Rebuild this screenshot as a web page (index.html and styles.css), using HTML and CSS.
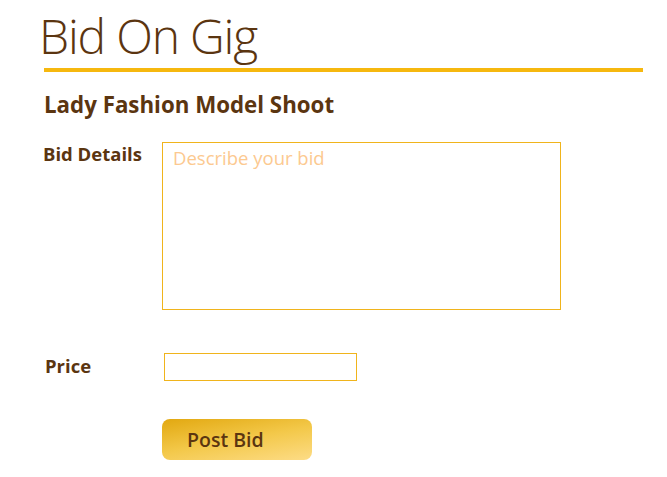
FILE: index.html
```html
<!DOCTYPE html>
<html>
<head>
<meta charset="utf-8">
<link rel="stylesheet" href="styles.css">
</head>
<body>
<div class="page">
  <h1 class="title">Bid On Gig</h1>
  <div class="rule"></div>
  <h2 class="gig">Lady Fashion Model Shoot</h2>
  <div class="row row-details">
    <label class="label">Bid Details</label>
    <textarea class="details" placeholder="Describe your bid"></textarea>
  </div>
  <div class="row row-price">
    <label class="label label-price">Price</label>
    <input class="price" type="text">
  </div>
  <div class="row row-btn">
    <button class="btn">Post Bid</button>
  </div>
</div>
</body>
</html>
```
FILE: styles.css
```css
html, body { margin: 0; padding: 0; background: #fff; }
body { font-family: "Open Sans", "Noto Sans", sans-serif; color: #5b3510; }
.page { padding: 8px 0 0 39px; width: 604px; }
.title {
  margin: 0;
  font-weight: 300;
  font-size: 48px;
  line-height: 56px;
  color: #5b3510;
  letter-spacing: -1.2px;
}
.rule { height: 4px; background: #f6b80f; margin: 4px 0 0 5px; }
.gig {
  margin: 19px 0 0 5px;
  font-size: 22.3px;
  font-weight: 700;
  line-height: 28px;
  letter-spacing: 0;
}
.row { display: flex; }
.label { font-weight: 700; font-size: 18.5px; line-height: 22px; }
.row-details { margin-top: 23px; }
.row-details .label { width: 119px; margin-left: 4px; margin-top: 1px; }
.details {
  width: 399px; height: 168px; box-sizing: border-box;
  border: 1px solid #f0b41c; border-radius: 0; resize: none; outline: none;
  font-family: inherit; font-size: 18.5px; line-height: 24px; padding: 3px 10px; margin: 0;
}
.details::placeholder { color: #fcc990; }
.row-price { margin-top: 43px; }
.label-price { width: 119px; margin-left: 6px; margin-top: 2px; }
.price {
  width: 193px; height: 28px; box-sizing: border-box; margin: 0;
  border: 1px solid #f0b41c; border-radius: 0; outline: none; padding: 0 6px;
}
.row-btn { margin-top: 38px; padding-left: 123px; }
.btn {
  width: 150px; height: 41px; border: none; border-radius: 8px;
  background: linear-gradient(170deg, #e2a810 0%, #f3c849 50%, #fddc86 100%);
  font-family: inherit; font-size: 19.5px; font-weight: 600; color: #5b3510;
  text-align: left; padding: 0 0 1px 25px;
}
```
